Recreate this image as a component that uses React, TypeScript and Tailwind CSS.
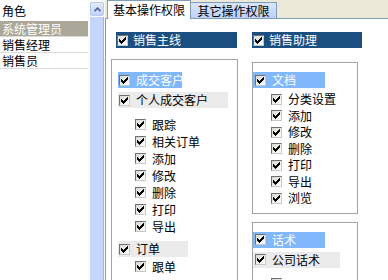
import React from "react"

const roles = ["系统管理员", "销售经理", "销售员"]

function Check() {
  return (
    <span className="flex h-[11px] w-[11px] shrink-0 items-center justify-center border border-t-[#6f6f6f] border-l-[#6f6f6f] border-r-[#c9c9c4] border-b-[#c9c9c4] bg-[linear-gradient(135deg,#d9d9d2,#ffffff)]">
      <svg width="7" height="7" viewBox="0 0 7 7" shapeRendering="crispEdges">
        <rect x="0" y="2" width="1" height="3" fill="#000" />
        <rect x="1" y="3" width="1" height="3" fill="#000" />
        <rect x="2" y="4" width="1" height="3" fill="#000" />
        <rect x="3" y="3" width="1" height="3" fill="#000" />
        <rect x="4" y="2" width="1" height="3" fill="#000" />
        <rect x="5" y="1" width="1" height="3" fill="#000" />
        <rect x="6" y="0" width="1" height="3" fill="#000" />
      </svg>
    </span>
  )
}

// sub item under a group (indented checkbox)
function Item({ label, indent, h }: { label: string; indent: string; h: string }) {
  return (
    <div className={`flex items-center ${indent} ${h}`}>
      <Check />
      <span className="ml-[6px] whitespace-nowrap">{label}</span>
    </div>
  )
}

export default function App() {
  return (
    <div className="flex h-[280px] w-[388px] overflow-hidden bg-white font-['Noto_Sans_CJK_SC',sans-serif] text-[12px] leading-none text-black">
      {/* role list */}
      <div className="flex w-[88px] shrink-0 flex-col">
        <div className="flex h-[21px] items-center pl-[2px]">角色</div>
        {roles.map((r, i) => (
          <div
            key={r}
            className={`flex h-[16px] items-center border-b border-[#dcdcd6] pl-[2px] whitespace-nowrap ${
              i === 0 ? "bg-[#aca899] text-white" : ""
            }`}
          >
            {r}
          </div>
        ))}
      </div>

      {/* scrollbar */}
      <div className="flex w-[17px] shrink-0 flex-col bg-[#fafaf7] pt-[2px] pl-[2px] pr-px">
        <div className="flex h-[14px] items-center justify-center rounded-[2px] border border-[#b7c9f2] bg-[linear-gradient(180deg,#e1eafe,#c3d3fd)]">
          <svg width="7" height="5" viewBox="0 0 7 5">
            <path d="M0.5 4.2 L3.5 1.2 L6.5 4.2" fill="none" stroke="#4d6185" strokeWidth="1.6" />
          </svg>
        </div>
        <div className="mt-px flex-1 border-r border-[#9fb5e8] bg-[#c6d5fb]" />
      </div>

      {/* tab control */}
      <div className="flex flex-1 flex-col">
        <div className="flex h-[20px] items-end border-b border-[#7f9db9] bg-[#ece9d8] pl-[2px]">
          <div className="relative z-10 -mb-px flex h-[19px] w-[84px] items-center justify-center border border-b-0 border-[#7f9db9] bg-white">
            基本操作权限
          </div>
          <div className="-ml-px flex h-[16px] w-[87px] items-center justify-center border border-b-0 border-[#7f9db9] bg-[linear-gradient(180deg,#dbe6fd,#bcd0f8)]">
            其它操作权限
          </div>
        </div>

        <div className="flex flex-1 border-l border-[#7f9db9]">
          {/* left column */}
          <div className="ml-[5px] flex w-[127px] shrink-0 flex-col">
            <div className="mt-[13px] ml-[5px] flex h-[16px] w-[121px] items-center bg-[#1b4f7f] pl-px text-white">
              <Check />
              <span className="ml-[5px]">销售主线</span>
            </div>
            <div className="mt-[11px] h-[260px] border border-[#a3a3a3]">
              <div className="mt-[12px] ml-[6px] flex h-[16px] w-[64px] items-center bg-[#80b8fb] pl-px text-white">
                <Check />
                <span className="ml-[6px] whitespace-nowrap">成交客户</span>
              </div>
              <div className="mt-[4px] ml-[6px] flex h-[16px] w-[110px] items-center bg-[#ebebeb] pl-px">
                <Check />
                <span className="ml-[6px] whitespace-nowrap">个人成交客户</span>
              </div>
              <div className="mt-[8px]">
                {["跟踪", "相关订单", "添加", "修改", "删除", "打印", "导出"].map((t) => (
                  <Item key={t} label={t} indent="ml-[23px]" h="h-[17px]" />
                ))}
              </div>
              <div className="mt-[6px] ml-[6px] flex h-[16px] w-[70px] items-center bg-[#ebebeb] pl-px">
                <Check />
                <span className="ml-[6px] whitespace-nowrap">订单</span>
              </div>
              <div className="mt-px">
                <Item label="跟单" indent="ml-[23px]" h="h-[17px]" />
              </div>
            </div>
          </div>

          {/* right column */}
          <div className="ml-[14px] flex w-[110px] shrink-0 flex-col">
            <div className="mt-[13px] flex h-[16px] w-[110px] items-center bg-[#1b4f7f] pl-px text-white">
              <Check />
              <span className="ml-[5px]">销售助理</span>
            </div>
            <div className="mt-[14px] w-[106px] border border-[#a3a3a3] pb-[6px]">
              <div className="mt-[9px] flex h-[16px] w-[72px] items-center bg-[#80b8fb] pl-[2px] text-white">
                <Check />
                <span className="ml-[6px]">文档</span>
              </div>
              <div className="mt-[3px]">
                {["分类设置", "添加", "修改", "删除", "打印", "导出", "浏览"].map((t) => (
                  <Item key={t} label={t} indent="ml-[18px]" h="h-[16.5px]" />
                ))}
              </div>
            </div>
            <div className="mt-[8px] h-[80px] w-[106px] border border-[#a3a3a3]">
              <div className="mt-[9px] flex h-[16px] w-[72px] items-center bg-[#80b8fb] pl-[2px] text-white">
                <Check />
                <span className="ml-[6px]">话术</span>
              </div>
              <div className="mt-[4px] flex h-[16px] w-[87px] items-center bg-[#ebebeb] pl-[2px]">
                <Check />
                <span className="ml-[6px] whitespace-nowrap">公司话术</span>
              </div>
              <div className="mt-[7px] ml-[18px] flex h-[17px] items-center">
                <Check />
              </div>
            </div>
          </div>
        </div>
      </div>
    </div>
  )
}
